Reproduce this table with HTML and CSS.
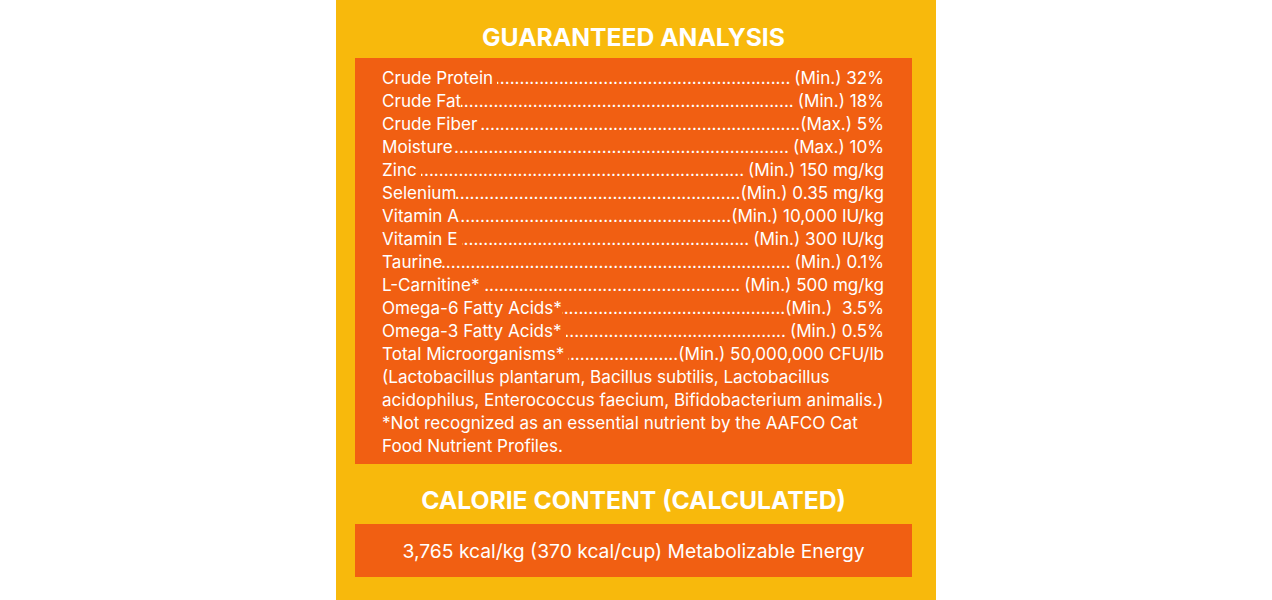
FILE: index.html
```html
<!DOCTYPE html>
<html lang="en">
<head>
<meta charset="utf-8">
<title>Guaranteed Analysis</title>
<link rel="stylesheet" href="styles.css">
</head>
<body>
<main class="panel">
  <h2 class="heading">GUARANTEED ANALYSIS</h2>
  <section class="box analysis">
    <div class="row"><span class="name gap">Crude Protein</span><span class="dots"></span><span class="val gap">(Min.) 32%</span></div>
    <div class="row"><span class="name">Crude Fat</span><span class="dots"></span><span class="val gap">(Min.) 18%</span></div>
    <div class="row"><span class="name gap">Crude Fiber</span><span class="dots"></span><span class="val">(Max.) 5%</span></div>
    <div class="row"><span class="name">Moisture</span><span class="dots"></span><span class="val gap">(Max.) 10%</span></div>
    <div class="row"><span class="name gap">Zinc</span><span class="dots"></span><span class="val gap">(Min.) 150 mg/kg</span></div>
    <div class="row"><span class="name">Selenium</span><span class="dots"></span><span class="val">(Min.) 0.35 mg/kg</span></div>
    <div class="row"><span class="name">Vitamin A</span><span class="dots"></span><span class="val">(Min.) 10,000 IU/kg</span></div>
    <div class="row"><span class="name gap">Vitamin E</span><span class="dots"></span><span class="val gap">(Min.) 300 IU/kg</span></div>
    <div class="row"><span class="name">Taurine</span><span class="dots"></span><span class="val gap">(Min.) 0.1%</span></div>
    <div class="row"><span class="name gap">L-Carnitine*</span><span class="dots"></span><span class="val gap">(Min.) 500 mg/kg</span></div>
    <div class="row"><span class="name">Omega-6 Fatty Acids*</span><span class="dots"></span><span class="val">(Min.)&nbsp; 3.5%</span></div>
    <div class="row"><span class="name gap">Omega-3 Fatty Acids*</span><span class="dots"></span><span class="val gap">(Min.) 0.5%</span></div>
    <div class="row"><span class="name gap">Total Microorganisms*</span><span class="dots"></span><span class="val">(Min.) 50,000,000 CFU/lb</span></div>
    <p class="note">(Lactobacillus plantarum, Bacillus subtilis, Lactobacillus acidophilus, Enterococcus faecium, Bifidobacterium animalis.)</p>
    <p class="note">*Not recognized as an essential nutrient by the AAFCO Cat Food Nutrient Profiles.</p>
  </section>
  <h2 class="heading heading-cal">CALORIE CONTENT (CALCULATED)</h2>
  <section class="box calorie">3,765 kcal/kg (370 kcal/cup) Metabolizable Energy</section>
</main>
</body>
</html>
```

FILE: styles.css
```css
html, body {
  margin: 0;
  padding: 0;
  background: #ffffff;
}
body {
  font-family: Inter, "Open Sans", sans-serif;
  color: #ffffff;
}
.panel {
  width: 600px;
  height: 600px;
  margin: 0 auto;
  background: #f8b90c;
  box-sizing: border-box;
  padding: 19px 24px 0 19px;
  display: flex;
  flex-direction: column;
  overflow: hidden;
}
.heading {
  margin: 0;
  text-align: center;
  font-size: 24.7px;
  font-weight: 700;
  line-height: 36px;
}
.heading-cal {
  margin-top: 18px;
}
.box {
  background: #f15f12;
}
.analysis {
  margin-top: 3px;
  padding: 8px 28px 7px 27px;
  font-size: 17.1px;
  line-height: 23px;
}
.row {
  display: flex;
  white-space: nowrap;
}
.name.gap {
  padding-right: 4px;
}
.val.gap {
  padding-left: 4px;
}
.dots {
  flex: 1;
  overflow: hidden;
  min-width: 0;
  direction: rtl;
}
.dots::after {
  content: "........................................................................................................................................................................";
}
.val {
  flex: none;
}
.note {
  margin: 0;
}
.calorie {
  margin-top: 6px;
  height: 53px;
  display: flex;
  align-items: center;
  justify-content: center;
  font-size: 19.3px;
}
```
